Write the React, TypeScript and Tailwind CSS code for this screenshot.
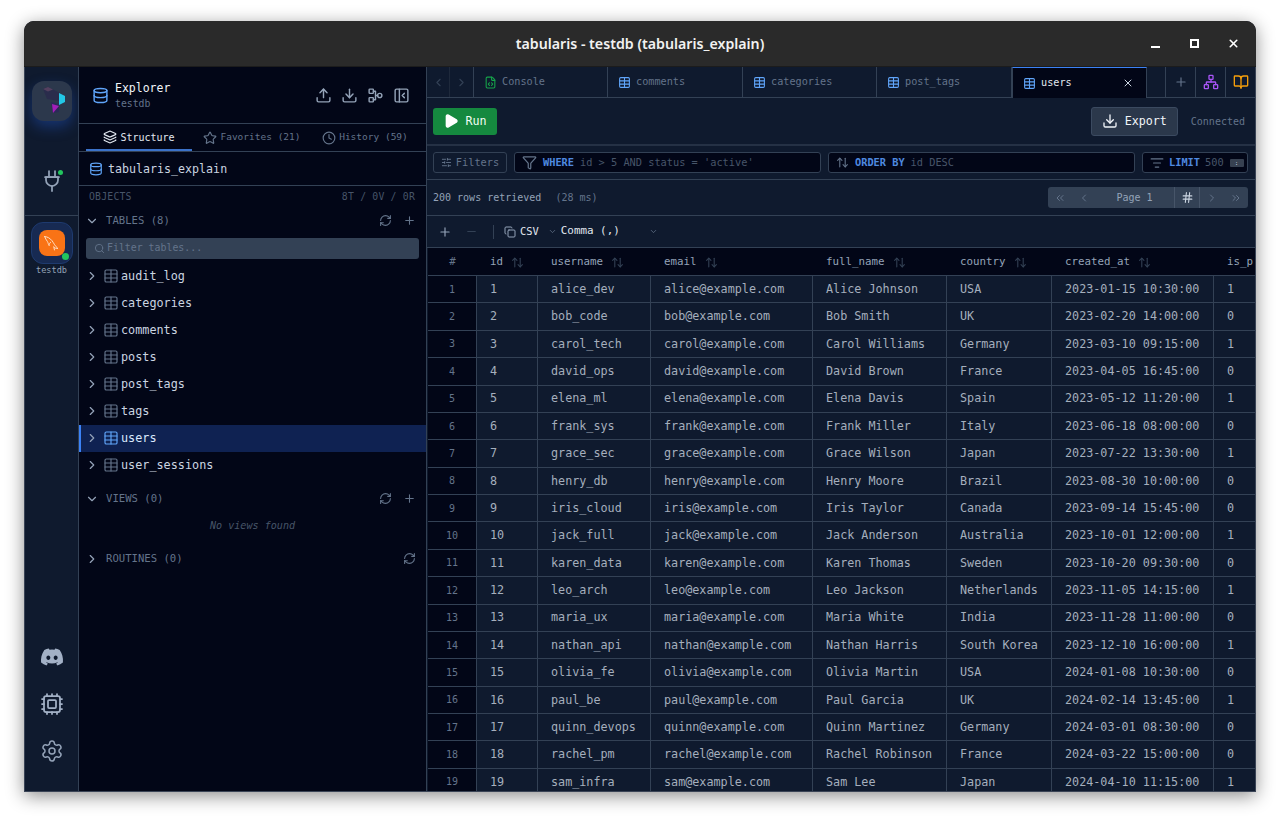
import { FaDiscord } from "react-icons/fa";
import {
  ArrowUpDown,
  BookOpen,
  ChevronDown,
  ChevronLeft,
  ChevronRight,
  ChevronsLeft,
  ChevronsRight,
  Clock,
  Copy,
  Cpu,
  Database,
  Download,
  FileCode,
  Filter,
  Hash,
  Layers,
  ListFilter,
  Network,
  PanelLeftClose,
  Play,
  Plug2,
  Plus,
  RefreshCw,
  Minus,
  Search,
  Settings,
  SlidersHorizontal,
  Star,
  Table,
  Upload,
  X,
} from "lucide-react";

const mono = "font-['DejaVu_Sans_Mono','Liberation_Mono',monospace]";

const tables = ["audit_log", "categories", "comments", "posts", "post_tags", "tags", "users", "user_sessions"];

const tabs = [
  { name: "comments", w: "w-[135px]" },
  { name: "categories", w: "w-[134px]" },
  { name: "post_tags", w: "w-[135px]" },
];

const columns = [
  { name: "id", w: "w-[61px]" },
  { name: "username", w: "w-[113px]" },
  { name: "email", w: "w-[162px]" },
  { name: "full_name", w: "w-[134px]" },
  { name: "country", w: "w-[105px]" },
  { name: "created_at", w: "w-[162px]" },
  { name: "is_p", w: "w-[60px]" },
];

const rows = [
  ["alice_dev", "alice@example.com", "Alice Johnson", "USA", "2023-01-15 10:30:00", "1"],
  ["bob_code", "bob@example.com", "Bob Smith", "UK", "2023-02-20 14:00:00", "0"],
  ["carol_tech", "carol@example.com", "Carol Williams", "Germany", "2023-03-10 09:15:00", "1"],
  ["david_ops", "david@example.com", "David Brown", "France", "2023-04-05 16:45:00", "0"],
  ["elena_ml", "elena@example.com", "Elena Davis", "Spain", "2023-05-12 11:20:00", "1"],
  ["frank_sys", "frank@example.com", "Frank Miller", "Italy", "2023-06-18 08:00:00", "0"],
  ["grace_sec", "grace@example.com", "Grace Wilson", "Japan", "2023-07-22 13:30:00", "1"],
  ["henry_db", "henry@example.com", "Henry Moore", "Brazil", "2023-08-30 10:00:00", "0"],
  ["iris_cloud", "iris@example.com", "Iris Taylor", "Canada", "2023-09-14 15:45:00", "0"],
  ["jack_full", "jack@example.com", "Jack Anderson", "Australia", "2023-10-01 12:00:00", "1"],
  ["karen_data", "karen@example.com", "Karen Thomas", "Sweden", "2023-10-20 09:30:00", "0"],
  ["leo_arch", "leo@example.com", "Leo Jackson", "Netherlands", "2023-11-05 14:15:00", "1"],
  ["maria_ux", "maria@example.com", "Maria White", "India", "2023-11-28 11:00:00", "0"],
  ["nathan_api", "nathan@example.com", "Nathan Harris", "South Korea", "2023-12-10 16:00:00", "1"],
  ["olivia_fe", "olivia@example.com", "Olivia Martin", "USA", "2024-01-08 10:30:00", "0"],
  ["paul_be", "paul@example.com", "Paul Garcia", "UK", "2024-02-14 13:45:00", "1"],
  ["quinn_devops", "quinn@example.com", "Quinn Martinez", "Germany", "2024-03-01 08:30:00", "0"],
  ["rachel_pm", "rachel@example.com", "Rachel Robinson", "France", "2024-03-22 15:00:00", "0"],
  ["sam_infra", "sam@example.com", "Sam Lee", "Japan", "2024-04-10 11:15:00", "1"],
];

function Logo() {
  return (
    <svg viewBox="0 0 40 40" className="size-10">
      <path d="M11 8l5-2 12 6v8l-13-2z" fill="#2a2c4c" />
      <path d="M11 8l5-2 5 2.5-5 2z" fill="#54405f" />
      <path d="M27 12l6 3v6l-6 3z" fill="#22c7e6" />
      <path d="M19 21l8 2v8l-6 1z" fill="#2b2a58" />
      <path d="M20 23l7 2-6 7z" fill="#a31fb8" />
    </svg>
  );
}

function Dolphin() {
  return (
    <svg viewBox="0 0 24 24" className="size-[22px]" fill="none" stroke="#ffe6d0" strokeWidth="1" strokeLinecap="round" strokeLinejoin="round">
      <path d="M4 5c3 0 6 2 8 4.5 2.2 2.8 3.2 6 6.5 8.5-2 .3-3.4-.4-4.5-1.6" />
      <path d="M4 5c.6 2 1.8 3.6 3 5.4.8 1.3.8 2.8 1.8 4.1" />
      <path d="M8.8 14.5c.2-1.6.6-2.6 1.8-3.4M14 16.4l.7 3.2" />
    </svg>
  );
}

function SplitIcon() {
  return (
    <svg viewBox="0 0 24 24" className="size-[17px]" fill="none" stroke="currentColor" strokeWidth="2" strokeLinecap="round" strokeLinejoin="round">
      <rect x="3" y="3" width="6" height="6" rx="1" />
      <rect x="3" y="15" width="6" height="6" rx="1" />
      <circle cx="18" cy="12" r="3" />
      <path d="M9 6h3v12H9M12 12h3" />
    </svg>
  );
}

function Rail() {
  return (
    <div className="flex w-[54px] shrink-0 flex-col items-center border-r border-[#334155] bg-[#0f1a2e]">
      <div className="mt-[14px] flex size-10 items-center justify-center rounded-xl bg-[#2c384c] shadow-[0_6px_14px_rgba(37,99,235,0.35)]">
        <Logo />
      </div>
      <div className="relative mt-12 flex h-6 w-full items-center justify-center">
        <Plug2 className="size-6 text-[#94a3b8]" strokeWidth={1.75} />
        <span className="absolute right-[15px] top-[1px] size-[5px] rounded-full bg-[#22c55e]" />
      </div>
      <div className="mt-[22px] w-full border-t border-[#334155]" />
      <div className="relative mt-[6px] flex size-[42px] items-center justify-center rounded-xl border border-[#1e3a6e] bg-[#172a52]">
        <div className="flex size-[26px] items-center justify-center rounded-lg bg-[#f97316]">
          <Dolphin />
        </div>
        <span className="absolute bottom-[3px] right-[3px] size-[7px] rounded-full bg-[#22c55e]" />
      </div>
      <span className={`${mono} text-[8.6px] leading-[12px] text-[#94a3b8]`}>testdb</span>
      <div className="mt-auto flex flex-col items-center gap-[23px] pb-[28px]">
        <FaDiscord className="size-6 text-[#a3b1c6]" />
        <Cpu className="size-6 text-[#a3b1c6]" strokeWidth={1.75} />
        <Settings className="size-6 text-[#94a3b8]" strokeWidth={1.5} />
      </div>
    </div>
  );
}

function SectionHead({ label, open, add }: { label: string; open?: boolean; add?: boolean }) {
  const Chevron = open ? ChevronDown : ChevronRight;
  return (
    <div className="flex items-center pl-[6px] pr-[10px] text-[#64748b]">
      <Chevron className="mr-[7px] size-[14px] text-[#94a3b8]" />
      <span className="text-[10.6px]">{label}</span>
      <RefreshCw className={`ml-auto size-[13px] ${add ? "mr-[11px]" : ""}`} />
      {add && <Plus className="size-[13px]" />}
    </div>
  );
}

function Sidebar() {
  return (
    <div className={`${mono} flex w-[348px] shrink-0 flex-col border-r border-[#334155] bg-[#020617]`}>
      <div className="flex h-[57px] items-center border-b border-[#334155] pl-[13px] pr-[16px]">
        <Database className="size-[17px] text-[#60a5fa]" />
        <div className="ml-[6px] pt-[2px]">
          <div className="text-[11.5px] leading-[15px] text-[#f1f5f9]">Explorer</div>
          <div className="text-[9.8px] leading-[15px] text-[#64748b]">testdb</div>
        </div>
        <div className="ml-auto flex items-center gap-[9px] text-[#94a3b8]">
          <Upload className="size-[17px]" />
          <Download className="size-[17px]" />
          <SplitIcon />
          <PanelLeftClose className="size-[17px]" />
        </div>
      </div>
      <div className="flex h-[28px] items-center border-b border-[#334155] pl-[7px] text-[9.5px] text-[#64748b]">
        <div className="flex h-full w-[106px] items-center justify-center gap-[3px] border-b-2 border-[#3b72c9] pt-[1px] text-[10px] font-medium text-[#e2e8f0]">
          <Layers className="size-[14px]" />
          Structure
        </div>
        <div className="flex h-full w-[120px] items-center justify-center gap-[3px]">
          <Star className="size-[14px]" />
          Favorites (21)
        </div>
        <div className="flex h-full w-[106px] items-center justify-center gap-[3px]">
          <Clock className="size-[14px]" />
          History (59)
        </div>
      </div>
      <div className="flex h-[34px] items-center gap-[5px] border-b border-[#334155] pl-[10px] text-[11.65px] text-[#cbd5e1]">
        <Database className="size-[14px] text-[#60a5fa]" />
        <span className="pt-[3px]">tabularis_explain</span>
      </div>
      <div className="flex h-[22px] items-center justify-between pl-[10px] pr-[11px] text-[9.8px] tracking-[0.02em] text-[#475569]">
        <span>OBJECTS</span>
        <span>8T / 0V / 0R</span>
      </div>
      <div className="mt-[5px]">
        <SectionHead label="TABLES (8)" open add />
      </div>
      <div className="mx-[7px] mt-[9px] flex h-[21px] items-center gap-[2px] rounded-[3px] bg-[#334155] px-2 text-[9.9px] text-[#64748b]">
        <Search className="size-[11px]" />
        <span className="pt-px">Filter tables...</span>
      </div>
      <div className="mt-[4px]">
        {tables.map((t) => {
          const active = t === "users";
          return (
            <div
              key={t}
              className={`flex h-[27px] items-center border-l-2 pl-[4px] text-[11.8px] ${
                active ? "border-[#3b82f6] bg-[#0f2252] text-[#dbeafe]" : "border-transparent text-[#cbd5e1]"
              }`}
            >
              <ChevronRight className="size-[14px] text-[#94a3b8]" />
              <Table className={`ml-[4px] size-[16px] ${active ? "text-[#60a5fa]" : "text-[#64748b]"}`} strokeWidth={1.75} />
              <span className="ml-[2px]">{t}</span>
            </div>
          );
        })}
      </div>
      <div className="mt-[12px]">
        <SectionHead label="VIEWS (0)" open add />
      </div>
      <div className="mt-[11px] text-center text-[10.1px] italic text-[#475569]">No views found</div>
      <div className="mt-[18px]">
        <SectionHead label="ROUTINES (0)" />
      </div>
    </div>
  );
}

function TabBar() {
  return (
    <div className={`${mono} flex h-[31px] shrink-0 border-b border-[#334155] bg-[#0f1a2e] text-[10.2px] text-[#64748b]`}>
      <div className="flex w-[47px] shrink-0 border-r border-[#334155] text-[#334155]">
        <div className="flex w-1/2 items-center justify-center border-r border-[#1e293b]">
          <ChevronLeft className="size-[13px]" />
        </div>
        <div className="flex w-1/2 items-center justify-center">
          <ChevronRight className="size-[13px]" />
        </div>
      </div>
      <div className="flex w-[134px] shrink-0 items-center gap-[5px] border-r border-[#334155] pl-[10px]">
        <FileCode className="size-[13px] text-[#16a34a]" />
        Console
      </div>
      {tabs.map((t) => (
        <div key={t.name} className={`flex ${t.w} shrink-0 items-center gap-[5px] border-r border-[#334155] pl-[10px]`}>
          <Table className="size-[13px] text-[#60a5fa]" />
          {t.name}
        </div>
      ))}
      <div className="-mb-px flex w-[135px] shrink-0 items-center gap-[5px] border-x border-t border-t-[#3b82f6] border-x-[#334155] bg-[#020617] pl-[10px] text-[#e2e8f0]">
        <Table className="size-[13px] text-[#60a5fa]" />
        users
        <X className="ml-auto mr-[12px] size-[12px] text-[#cbd5e1]" />
      </div>
      <div className="flex-1" />
      <div className="flex w-[30px] items-center justify-center border-l border-[#334155]">
        <Plus className="size-[14px] text-[#64748b]" />
      </div>
      <div className="flex w-[30px] items-center justify-center border-l border-[#334155]">
        <Network className="size-[16px] text-[#a855f7]" />
      </div>
      <div className="flex w-[30px] items-center justify-center border-l border-[#334155]">
        <BookOpen className="size-[16px] text-[#f59e0b]" />
      </div>
    </div>
  );
}

function Toolbar() {
  return (
    <div className={`${mono} flex h-[48px] shrink-0 items-center border-b-2 border-[#253145] pl-[6px] pr-[10px]`}>
      <button className="flex h-[27px] w-[64px] items-center justify-center gap-[6px] rounded-[3px] bg-[#15893f] text-[11.7px] text-[#f0fdf4]">
        <Play className="size-[16px] fill-white text-white" />
        <span className="pt-[2px]">Run</span>
      </button>
      <button className="ml-auto flex h-[29px] w-[87px] items-center justify-center gap-[7px] rounded-[3px] border border-[#3b4a60] bg-[#2b384b] text-[11.7px] text-[#f1f5f9]">
        <Download className="size-[16px]" />
        <span className="pt-[2px]">Export</span>
      </button>
      <span className="ml-[13px] text-[10px] text-[#64748b]">Connected</span>
    </div>
  );
}

function FilterBar() {
  return (
    <div className={`${mono} flex h-[34px] shrink-0 items-center gap-[7px] border-b border-[#334155] pl-[6px] pr-[7px] text-[10.3px] text-[#475569]`}>
      <div className="flex h-[21px] w-[74px] items-center justify-center gap-[4px] rounded-[3px] border border-[#334155] text-[#64748b]">
        <SlidersHorizontal className="size-[11px]" />
        Filters
      </div>
      <div className="flex h-[21px] w-[307px] items-center gap-[6px] rounded-[3px] border border-[#334155] bg-[#020617] pl-[7px]">
        <Filter className="size-[15px] text-[#64748b]" />
        <span className="font-bold text-[#4f8ae0]">WHERE</span>
        <span>id &gt; 5 AND status = 'active'</span>
      </div>
      <div className="flex h-[21px] w-[307px] items-center gap-[6px] rounded-[3px] border border-[#334155] bg-[#020617] pl-[7px]">
        <ArrowUpDown className="size-[13px] text-[#64748b]" />
        <span className="font-bold text-[#4f8ae0]">ORDER BY</span>
        <span>id DESC</span>
      </div>
      <div className="flex h-[21px] flex-1 items-center gap-[5px] rounded-[3px] border border-[#334155] bg-[#020617] pl-[7px]">
        <ListFilter className="size-[14px] text-[#64748b]" />
        <span className="font-bold text-[#4f8ae0]">LIMIT</span>
        <span>500</span>
        <span className="ml-[1px] flex h-[8px] w-[14px] items-center justify-center rounded-[1px] bg-[#374151] text-[6px] leading-none text-[#cbd5e1]">:</span>
      </div>
    </div>
  );
}

function StatusBar() {
  return (
    <div className={`${mono} flex h-[36px] shrink-0 items-center border-b border-[#334155] pl-[6px] pr-[7px] text-[10px] text-[#94a3b8]`}>
      <span>200 rows retrieved</span>
      <span className="ml-[14px] text-[#64748b]">(28 ms)</span>
      <div className="ml-auto flex h-[21px] w-[200px] items-center rounded-[3px] bg-[#334155] text-[#94a3b8]">
        <div className="flex w-[24px] justify-center text-[#64748b]">
          <ChevronsLeft className="size-[12px]" />
        </div>
        <div className="flex w-[24px] justify-center text-[#64748b]">
          <ChevronLeft className="size-[12px]" />
        </div>
        <div className="w-[78px] pr-[1px] text-center">Page 1</div>
        <div className="flex h-full w-[26px] items-center justify-center border-x border-[#475569]">
          <Hash className="size-[13px] text-[#cbd5e1]" />
        </div>
        <div className="flex w-[24px] justify-center text-[#64748b]">
          <ChevronRight className="size-[12px]" />
        </div>
        <div className="flex w-[24px] justify-center text-[#64748b]">
          <ChevronsRight className="size-[12px]" />
        </div>
      </div>
    </div>
  );
}

function DataActions() {
  return (
    <div className={`${mono} flex h-[31px] shrink-0 items-center pl-[11px] text-[10.4px] text-[#e2e8f0]`}>
      <Plus className="size-[14px] text-[#94a3b8]" />
      <Minus className="ml-[13px] size-[13px] text-[#334155]" />
      <div className="ml-[15px] h-[14px] border-l border-[#334155]" />
      <Copy className="ml-[10px] size-[12px] text-[#94a3b8]" />
      <span className="ml-[4px] font-medium">CSV</span>
      <ChevronDown className="ml-[9px] size-[9px] text-[#64748b]" />
      <span className="ml-[4px] text-[10.9px] font-medium">Comma (,)</span>
      <ChevronDown className="ml-[29px] size-[9px] text-[#64748b]" />
    </div>
  );
}

function DataTable() {
  return (
    <div className={`${mono} min-h-0 flex-1 overflow-hidden border-t border-[#334155] pl-px text-[11.75px]`}>
      <div className="flex h-[27px] bg-[#020617] pt-[2px] text-[10.8px] text-[#94a3b8]">
        <div className="flex w-[49px] shrink-0 items-center justify-center text-[#64748b]">#</div>
        {columns.map((c) => (
          <div key={c.name} className={`flex ${c.w} shrink-0 items-center gap-[8px] pl-[13px]`}>
            {c.name}
            {c.name !== "is_p" && <ArrowUpDown className="size-[13px] text-[#334155]" />}
          </div>
        ))}
      </div>
      {rows.map((r, i) => (
        <div key={r[0]} className="flex h-[27.39px] border-t border-[#334155] text-[#a5afbd]">
          <div className="flex w-[49px] shrink-0 items-center justify-center border-r border-[#334155] bg-[#020617] text-[10px] text-[#64748b]">
            {i + 1}
          </div>
          <div className={`flex ${columns[0].w} shrink-0 items-center border-r border-[#334155] pl-[13px] pt-px`}>{i + 1}</div>
          {r.map((cell, j) => (
            <div
              key={j}
              className={`flex ${columns[j + 1].w} shrink-0 items-center pl-[13px] pt-px ${j < 5 ? "border-r border-[#334155]" : ""}`}
            >
              {cell}
            </div>
          ))}
        </div>
      ))}
    </div>
  );
}

export default function App() {
  return (
    <div className="h-[819px] overflow-hidden bg-white px-[24px] pt-[21px]">
      <div className="flex h-[771px] flex-col overflow-hidden rounded-t-[10px] bg-[#020617] shadow-[0_4px_18px_rgba(0,0,0,0.45)]">
        <div className="relative flex h-[46px] shrink-0 items-center justify-center border-b border-[#1c1c1c] bg-[#2a2a2a]">
          <span className="font-['Noto_Sans',sans-serif] text-[14.2px] font-semibold text-[#f2f2f2]">
            tabularis - testdb (tabularis_explain)
          </span>
          <div className="absolute right-[18px] flex items-center gap-[30px] text-white">
            <div className="mt-[7px] h-[2px] w-[9px] bg-white" />
            <div className="size-[9px] border-2 border-white" />
            <div className="flex w-[9px] justify-center">
              <X className="size-[13px] shrink-0" strokeWidth={3} />
            </div>
          </div>
        </div>
        <div className="flex min-h-0 flex-1 border border-t-0 border-[#3a4456]">
          <Rail />
          <Sidebar />
          <div className="flex min-w-0 flex-1 flex-col bg-[#0f1a2e]">
            <TabBar />
            <Toolbar />
            <FilterBar />
            <StatusBar />
            <DataActions />
            <DataTable />
          </div>
        </div>
      </div>
    </div>
  );
}
